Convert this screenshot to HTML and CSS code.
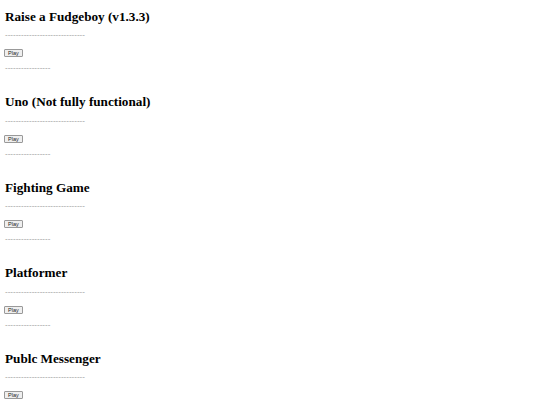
FILE: index.html
```html
<!DOCTYPE html>
<html>
<head>
<meta charset="utf-8">
<link rel="stylesheet" href="styles.css">
</head>
<body>
<section class="game">
<h2 class="title">Raise a Fudgeboy (v1.3.3)</h2>
<div class="rule">------------------------------</div>
<button class="play">Play</button>
<div class="rule short">-----------------</div>
</section>
<section class="game">
<h2 class="title">Uno (Not fully functional)</h2>
<div class="rule">------------------------------</div>
<button class="play">Play</button>
<div class="rule short">-----------------</div>
</section>
<section class="game">
<h2 class="title">Fighting Game</h2>
<div class="rule">------------------------------</div>
<button class="play">Play</button>
<div class="rule short">-----------------</div>
</section>
<section class="game">
<h2 class="title">Platformer</h2>
<div class="rule">------------------------------</div>
<button class="play">Play</button>
<div class="rule short">-----------------</div>
</section>
<section class="game">
<h2 class="title">Publc Messenger</h2>
<div class="rule">------------------------------</div>
<button class="play">Play</button>
<div class="rule short">-----------------</div>
</section>
</body>
</html>
```
FILE: styles.css
```css
html, body {
  background: #ffffff;
}
body {
  margin: 0;
  padding: 8.5px 4px 0;
  font-family: "Liberation Serif", "Times New Roman", serif;
  color: #000;
}
.game {
  display: flex;
  flex-direction: column;
  align-items: flex-start;
  padding-bottom: 23px;
}
.title {
  margin: 0 0 0 1px;
  font-size: 13.2px;
  line-height: 15px;
  font-weight: bold;
  white-space: nowrap;
}
.rule {
  margin: 8.5px 0 0 1px;
  font-family: "Liberation Sans", Arial, sans-serif;
  font-size: 8px;
  line-height: 6px;
  height: 6px;
  color: #999;
  white-space: nowrap;
}
.short {
  margin-top: 8px;
}
.play {
  margin: 11px 0 0 0;
  padding: 0 3px;
  height: 8px;
  font-family: "Liberation Sans", Arial, sans-serif;
  font-size: 5.5px;
  line-height: 6px;
  color: #222;
  background: #efefef;
  border: 1px solid #999;
  border-radius: 1px;
}
```
